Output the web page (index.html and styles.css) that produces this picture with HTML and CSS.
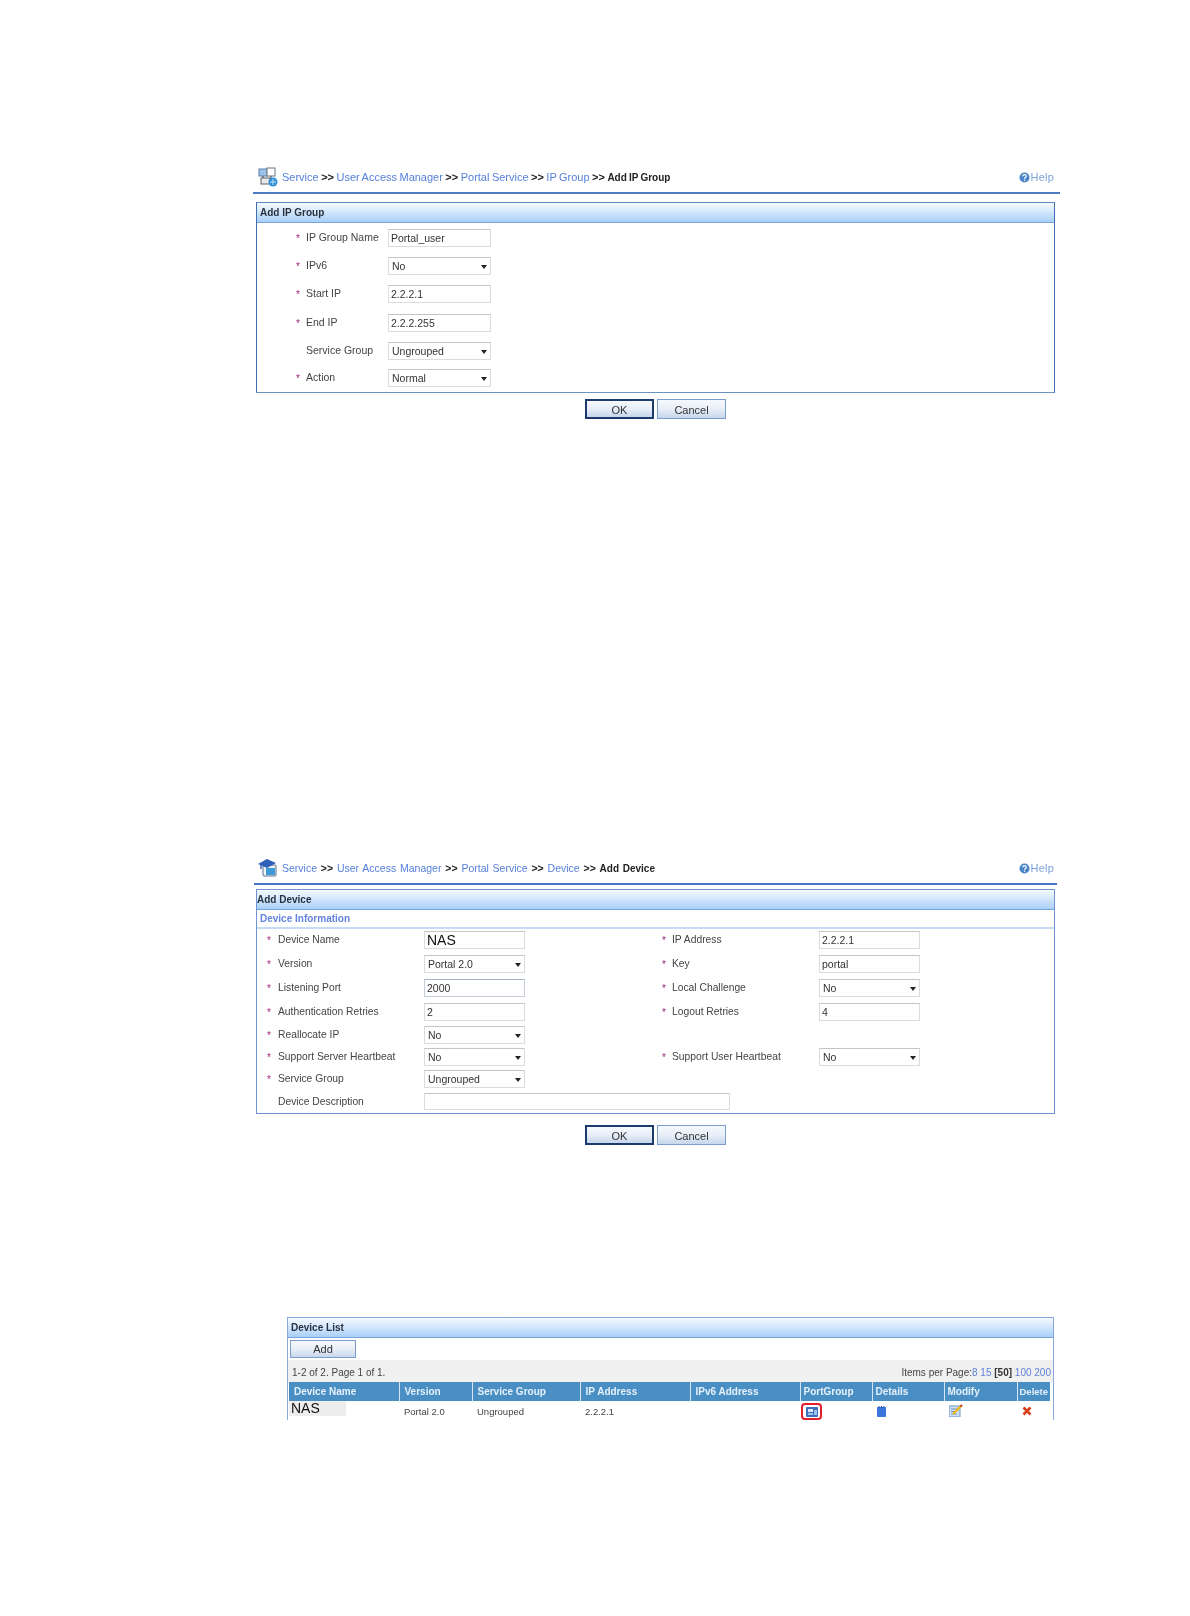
FILE: index.html
```html
<!DOCTYPE html>
<html lang="en">
<head>
<meta charset="utf-8">
<title>Portal Service</title>
<link rel="stylesheet" href="styles.css">
</head>
<body>
<main class="page">

<section class="shot shot-a soft-a">
  <header class="crumbs">
    <svg class="crumb-icon" viewBox="0 0 20 20" width="20" height="20">
      <rect x="1" y="2" width="8" height="7" fill="#9cc4ea" stroke="#5a7fa8"/>
      <rect x="9" y="1" width="8" height="8" fill="#fff" stroke="#6a7480"/>
      <rect x="3" y="11" width="9" height="6" fill="#e8e8e8" stroke="#5a6068"/>
      <path d="M5 9v2M13 9v3" stroke="#444"/>
      <circle cx="15" cy="15" r="4.5" fill="#2f8fd8"/>
      <path d="M12 15h6M15 12v6" stroke="#bfe2fa"/>
    </svg>
    <nav class="trail">
      <a>Service</a> <b>&gt;&gt;</b> <a>User Access Manager</a> <b>&gt;&gt;</b> <a>Portal Service</a> <b>&gt;&gt;</b> <a>IP Group</a> <b>&gt;&gt;</b> <b class="cur">Add IP Group</b>
    </nav>
    <span class="help">
      <svg viewBox="0 0 12 12" width="11" height="11"><circle cx="6" cy="6" r="5.5" fill="#4a86c8"/><path d="M4.2 4.6c0-2.2 3.7-2.2 3.7 0 0 1.4-1.9 1.2-1.9 2.7" fill="none" stroke="#fff" stroke-width="1.3"/><rect x="5.4" y="8.3" width="1.3" height="1.4" fill="#fff"/></svg>
      Help
    </span>
  </header>
  <div class="panel panel-a">
    <h2 class="panel-title">Add IP Group</h2>
    <div class="form-a">
      <div class="field"><i class="star">*</i><label>IP Group Name</label><div class="box">Portal_user</div></div>
      <div class="field"><i class="star">*</i><label>IPv6</label><div class="box select">No</div></div>
      <div class="field"><i class="star">*</i><label>Start IP</label><div class="box">2.2.2.1</div></div>
      <div class="field"><i class="star">*</i><label>End IP</label><div class="box">2.2.2.255</div></div>
      <div class="field"><i class="star"></i><label>Service Group</label><div class="box select">Ungrouped</div></div>
      <div class="field"><i class="star">*</i><label>Action</label><div class="box select">Normal</div></div>
    </div>
  </div>
  <div class="actions">
    <button class="btn btn-default">OK</button>
    <button class="btn">Cancel</button>
  </div>
</section>

<section class="shot shot-b soft-b">
  <header class="crumbs">
    <svg class="crumb-icon" viewBox="0 0 20 20" width="20" height="20">
      <rect x="5" y="7" width="13" height="11" rx="1" fill="#eef3f8" stroke="#5a7088"/>
      <rect x="8" y="10" width="9" height="7" fill="#3f9ad8"/>
      <path d="M0 6l9-5 9 4-9 5z" fill="#2f5fb8"/>
      <path d="M3 7v4" stroke="#2f5fb8" stroke-width="1.4"/>
    </svg>
    <nav class="trail trail-wide">
      <a>Service</a> <b>&gt;&gt;</b> <a>User Access Manager</a> <b>&gt;&gt;</b> <a>Portal Service</a> <b>&gt;&gt;</b> <a>Device</a> <b>&gt;&gt;</b> <b class="cur">Add Device</b>
    </nav>
    <span class="help">
      <svg viewBox="0 0 12 12" width="11" height="11"><circle cx="6" cy="6" r="5.5" fill="#4a86c8"/><path d="M4.2 4.6c0-2.2 3.7-2.2 3.7 0 0 1.4-1.9 1.2-1.9 2.7" fill="none" stroke="#fff" stroke-width="1.3"/><rect x="5.4" y="8.3" width="1.3" height="1.4" fill="#fff"/></svg>
      Help
    </span>
  </header>
  <div class="panel panel-b">
    <h2 class="panel-title flush">Add Device</h2>
    <h3 class="panel-sub">Device Information</h3>
    <div class="form-b">
      <div class="field"><i class="star">*</i><label>Device Name</label><div class="box big">NAS</div></div>
      <div class="field"><i class="star">*</i><label>IP Address</label><div class="box">2.2.2.1</div></div>
      <div class="field"><i class="star">*</i><label>Version</label><div class="box select">Portal 2.0</div></div>
      <div class="field"><i class="star">*</i><label>Key</label><div class="box">portal</div></div>
      <div class="field"><i class="star">*</i><label>Listening Port</label><div class="box strong">2000</div></div>
      <div class="field"><i class="star">*</i><label>Local Challenge</label><div class="box select">No</div></div>
      <div class="field"><i class="star">*</i><label>Authentication Retries</label><div class="box">2</div></div>
      <div class="field"><i class="star">*</i><label>Logout Retries</label><div class="box">4</div></div>
      <div class="field"><i class="star">*</i><label>Reallocate IP</label><div class="box select">No</div></div>
      <div class="field"></div>
      <div class="field"><i class="star">*</i><label>Support Server Heartbeat</label><div class="box select">No</div></div>
      <div class="field"><i class="star">*</i><label>Support User Heartbeat</label><div class="box select">No</div></div>
      <div class="field"><i class="star">*</i><label>Service Group</label><div class="box select">Ungrouped</div></div>
      <div class="field"></div>
      <div class="field field-wide"><i class="star"></i><label>Device Description</label><div class="box box-wide"></div></div>
    </div>
  </div>
  <div class="actions">
    <button class="btn btn-default">OK</button>
    <button class="btn">Cancel</button>
  </div>
</section>

<section class="shot-c soft-b">
  <div class="panel panel-c">
    <h2 class="panel-title">Device List</h2>
    <div class="toolbar"><button class="btn btn-add">Add</button></div>
    <div class="pager">
      <span>1-2 of 2. Page 1 of 1.</span>
      <span>Items per Page:<a>8</a> <a>15</a> <b>[50]</b> <a>100</a> <a>200</a></span>
    </div>
    <table class="list">
      <colgroup>
        <col class="c1"><col class="c2"><col class="c3"><col class="c4"><col class="c5"><col class="c6"><col class="c7"><col class="c8"><col class="c9">
      </colgroup>
      <thead>
        <tr><th>Device Name</th><th>Version</th><th>Service Group</th><th>IP Address</th><th>IPv6 Address</th><th>PortGroup</th><th>Details</th><th>Modify</th><th>Delete</th></tr>
      </thead>
      <tbody>
        <tr>
          <td class="name"><span>NAS</span></td>
          <td>Portal 2.0</td>
          <td>Ungrouped</td>
          <td>2.2.2.1</td>
          <td></td>
          <td>
            <span class="ring">
              <svg viewBox="0 0 12 10" width="12" height="10"><rect width="12" height="10" rx="1" fill="#3f6fb8"/><rect x="2" y="2" width="5" height="3" fill="#dfeafa"/><rect x="8" y="3" width="3" height="5" fill="#9cc4ea"/><rect x="2" y="6" width="5" height="2" fill="#9cc4ea"/></svg>
            </span>
          </td>
          <td><svg class="ic-details" viewBox="0 0 9 11" width="9" height="11"><rect y="1" width="9" height="10" rx="1" fill="#3a76dc"/><path d="M2 0v2M4.500 0v2M7 0v2" stroke="#1f4ea8"/></svg></td>
          <td><svg class="ic-modify" viewBox="0 0 14 13" width="14" height="13"><rect y="2" width="11" height="11" fill="#cfe0f4" stroke="#6d93c8"/><path d="M2 5h6M2 7.500h5M2 10h6" stroke="#6d93c8"/><path d="M4 10L12 2" stroke="#e8b818" stroke-width="2.400"/><path d="M11.500 2.500L13 1" stroke="#b83a20" stroke-width="2"/></svg></td>
          <td><svg class="ic-delete" viewBox="0 0 10 10" width="10" height="10"><path d="M1.500 1.500l7 7M8.500 1.500l-7 7" stroke="#d8401c" stroke-width="2.600"/></svg></td>
        </tr>
      </tbody>
    </table>
  </div>
</section>

</main>
</body>
</html>
```
FILE: styles.css
```css
* { box-sizing: border-box; }
html, body { margin: 0; background: #fff; }
body { font-family: "Liberation Sans", Arial, sans-serif; font-size: 11px; color: #444; }

.page { width: 1190px; height: 1616px; overflow: hidden; padding-top: 167px; }
.soft-a { filter: blur(0.35px); }
.soft-b { filter: blur(0.5px); }

.shot { margin-left: 253px; width: 807px; }
.shot-b { margin-top: 439px; width: 803px; margin-left: 254px; }
.shot-c { margin: 172px 0 0 287px; width: 767px; }

.crumbs {
  height: 27px;
  display: flex;
  align-items: flex-start;
  border-bottom: 2px solid #4f7cc0;
  padding: 0 6px 0 5px;
}
.shot-b .crumbs { height: 27px; padding: 0 3px 0 4px; border-bottom-color: #4a72cc; }
.crumb-icon { flex: none; margin-right: 4px; }
.trail { margin-top: 4px; flex: 1; line-height: 13px; font-size: 11px; color: #222; word-spacing: -0.6px; white-space: nowrap; }
.trail-wide { font-size: 10.5px; word-spacing: 0.9px; }
.trail a { color: #5680dc; }
.trail b { font-weight: bold; color: #222; }
.trail .cur { font-size: 10px; }
.help { margin-top: 4px; line-height: 13px; color: #7da2d8; display: inline-flex; align-items: center; gap: 1px; letter-spacing: 0.2px; }

.panel { margin-left: 3px; }
.panel-a { margin-top: 8px; width: 799px; height: 191px; border: 1px solid #3f6fb0; border-top-color: #5b86c4; border-bottom-color: #6d94bd; }
.panel-b { margin-top: 4px; margin-left: 2px; width: 799px; height: 225px; border: 1px solid #6f93d4; }
.panel-c { margin: 0; width: 767px; height: 103px; border: 1px solid #8aa6dc; border-bottom: 0; }

.panel-title {
  margin: 0;
  height: 20px;
  padding: 0 3px;
  font-size: 10px;
  line-height: 20px;
  font-weight: bold;
  color: #2a3240;
  background: linear-gradient(#f4f9ff, #dcecfd 35%, #a9d0f8);
  border-bottom: 1px solid #76a4d8;
}
.panel-title.flush { padding-left: 0; }
.panel-sub {
  margin: 0;
  height: 19px;
  padding: 0 3px;
  font-size: 10px;
  line-height: 18px;
  font-weight: bold;
  color: #6484dc;
  border-bottom: 2px solid #c4dcf6;
}

.field { display: flex; align-items: flex-start; }
.field label { line-height: 14px; color: #444; white-space: nowrap; }
.star { font-style: normal; color: #a02478; font-size: 10px; line-height: 20px; font-weight: normal; }
.box {
  position: relative;
  flex: none;
  height: 18px;
  padding: 0 2px;
  font-size: 10.5px;
  line-height: 17px;
  color: #333;
  background: #fff;
  border: 1px solid #dcdcdc;
  border-top-color: #c4c4c4;
  white-space: nowrap;
}
.select { padding-left: 3px; }
.select::after {
  content: "";
  position: absolute;
  right: 3px;
  top: 7px;
  border: 3px solid transparent;
  border-top: 4px solid #222;
  border-bottom: 0;
}
.big { font-size: 14px; color: #111; }
.strong { border-color: #c6d0da; border-top-color: #a8b4c0; }

.form-a {
  display: grid;
  grid-template-rows: 28px 28px 29px 28px 27px 23px;
  padding: 6px 0 0 39px;
}
.form-a .star { width: 10px; }
.form-a label { width: 82px; margin-top: 1px; font-size: 10.5px; }
.form-a .box { width: 103px; }

.form-b {
  display: grid;
  grid-template-columns: 395px 395px;
  grid-template-rows: 24px 24px 24px 23px 22px 22px 23px 21px;
  padding: 2px 0 0 10px;
}
.form-b .star { width: 11px; }
.form-b label { width: 146px; margin-top: 2px; font-size: 10.3px; }
.form-b .field:nth-child(even) .star { width: 10px; }
.form-b .field:nth-child(even) label { width: 147px; }
.form-b .box { width: 101px; }
.form-b .big { font-size: 14px; }
.form-b .box-wide { width: 306px; height: 17px; }
.field-wide { grid-column: 1 / 3; }

.actions { display: flex; justify-content: center; gap: 3px; padding-top: 6px; margin-left: 3px; width: 799px; }
.shot-b .actions { padding-top: 11px; margin-left: 2px; width: 799px; }
.btn {
  width: 69px;
  height: 20px;
  padding: 1px 0 0;
  font: 11px/16px "Liberation Sans", Arial, sans-serif;
  color: #333;
  background: linear-gradient(#f6f9fd, #e8eef8 50%, #c6d6ec);
  border: 1px solid #7c9ccc;
}
.btn-default { border: 2px solid #1c3a6c; }

.toolbar { height: 22px; padding: 2px 0 0 2px; }
.btn-add { width: 66px; height: 18px; padding: 1px 0 0; line-height: 15px; display: block; }
.pager {
  height: 22px;
  display: flex;
  justify-content: space-between;
  align-items: center;
  padding: 3px 2px 0 4px;
  font-size: 10px;
  color: #444;
  background: #f0f0f0;
}
.pager a { color: #5f82dc; }
.pager b { color: #333; }

.list { width: 761px; margin-left: 1px; border-collapse: collapse; table-layout: fixed; }
.c1 { width: 110px; }
.c2 { width: 73px; }
.c3 { width: 108px; }
.c4 { width: 110px; }
.c5 { width: 110px; }
.c6 { width: 72px; }
.c7 { width: 72px; }
.c8 { width: 73px; }
.c9 { width: 33px; }
.list th {
  height: 19px;
  padding: 0 0 0 5px;
  text-align: left;
  font-size: 10px;
  font-weight: bold;
  color: #e4f0fa;
  background: #4a8fc4;
  border-left: 1px solid #d4e6f4;
  white-space: nowrap;
  overflow: hidden;
}
.list th:first-child { border-left: 0; }
.list th:nth-child(n+6) { padding-left: 3px; }
.list th:last-child { padding-left: 2px; font-size: 9.5px; }
.list td { height: 20px; padding: 0 0 0 5px; font-size: 9.5px; color: #444; vertical-align: middle; }
.list td:nth-child(n+6) { padding-left: 3px; }
.list td.name { padding: 0; font-size: 14px; color: #111; vertical-align: top; }
.name span { display: block; width: 57px; height: 15px; line-height: 14px; padding-left: 2px; background: #ededed; }
.ring {
  display: inline-flex;
  align-items: center;
  justify-content: center;
  width: 21px;
  height: 17px;
  margin: 1px 0 0 -2px;
  border: 2px solid #e0202c;
  border-radius: 4px;
}
.ring svg { display: block; }
.ic-details, .ic-modify, .ic-delete { display: block; }
.ic-details { margin-left: 2px; }
.ic-modify { margin-left: 2px; margin-top: -2px; }
.ic-delete { margin-left: 2px; }
```
